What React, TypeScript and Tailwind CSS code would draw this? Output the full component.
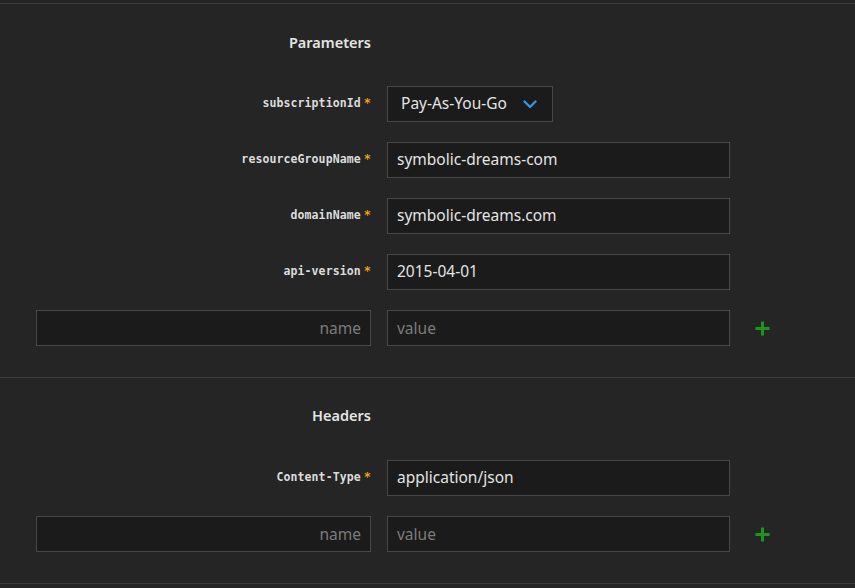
import { useState } from 'react'

type Field = {
  label: string
  value: string
  select?: boolean
}

const params: Field[] = [
  { label: 'subscriptionId', value: 'Pay-As-You-Go', select: true },
  { label: 'resourceGroupName', value: 'symbolic-dreams-com' },
  { label: 'domainName', value: 'symbolic-dreams.com' },
  { label: 'api-version', value: '2015-04-01' },
]

const headers: Field[] = [{ label: 'Content-Type', value: 'application/json' }]

const uiFont = { fontFamily: '"Noto Sans", "Open Sans", sans-serif' }
const monoFont = { fontFamily: '"DejaVu Sans Mono", "Liberation Mono", monospace' }

const Chevron = () => (
  <svg width="14" height="9" viewBox="0 0 14 9" className="shrink-0">
    <path d="M1.5 1.5 L7 7 L12.5 1.5" fill="none" stroke="#3794e0" strokeWidth="2.4" strokeLinecap="round" strokeLinejoin="round" />
  </svg>
)

const Plus = () => (
  <svg width="15" height="15" viewBox="0 0 15 15">
    <path d="M7.5 0.5 V14.5 M0.5 7.5 H14.5" stroke="#1d961d" strokeWidth="3" />
  </svg>
)

const Row = ({ field }: { field: Field }) => (
  <>
    <div className="flex items-center justify-end h-9">
      <span className="text-[11.5px] font-bold text-[#dcdcdc] tracking-[0.1px]" style={monoFont}>
        {field.label}
      </span>
      <span className="ml-[3px] text-[12px] font-bold text-[#e8a317] -mt-[2px]" style={monoFont}>*</span>
    </div>
    <div className="flex items-center h-9">
      {field.select ? (
        <div className="w-[166px] h-9 bg-[#1b1b1b] border border-[#474747] flex items-center justify-between pl-[13px] pr-[15px]">
          <span className="text-[15.5px] text-[#e4e4e4]" style={uiFont}>{field.value}</span>
          <Chevron />
        </div>
      ) : (
        <div className="w-full h-9 bg-[#1b1b1b] border border-[#474747] flex items-center pl-[9px]">
          <span className="text-[15.5px] text-[#e4e4e4]" style={uiFont}>{field.value}</span>
        </div>
      )}
    </div>
    <div />
  </>
)

const NewRow = () => {
  const [name, setName] = useState('')
  const [value, setValue] = useState('')
  return (
    <>
      <input
        value={name}
        onChange={(e) => setName(e.target.value)}
        placeholder="name"
        className="h-9 bg-[#1b1b1b] border border-[#474747] text-right pr-[9px] text-[15.5px] text-[#e4e4e4] placeholder:text-[#7b7b7b] outline-none"
        style={uiFont}
      />
      <input
        value={value}
        onChange={(e) => setValue(e.target.value)}
        placeholder="value"
        className="h-9 bg-[#1b1b1b] border border-[#474747] pl-[9px] text-[15.5px] text-[#e4e4e4] placeholder:text-[#7b7b7b] outline-none"
        style={uiFont}
      />
      <div className="flex items-center h-9 pl-[9px]">
        <Plus />
      </div>
    </>
  )
}

const Section = ({ title, fields, top, gap }: { title: string; fields: Field[]; top: string; gap: string }) => (
  <div className={`border-t border-[#3c3c3c] pb-[31px] ${top}`}>
    <div className="grid grid-cols-[335px_343px_auto] gap-x-4 gap-y-5 ml-[36px]">
      <div className={`flex justify-end ${gap}`}>
        <h2 className="text-[14.5px] font-semibold text-[#e4e4e4] leading-5" style={uiFont}>{title}</h2>
      </div>
      <div className={gap} />
      <div className={gap} />
      {fields.map((f) => (
        <Row key={f.label} field={f} />
      ))}
      <NewRow />
    </div>
  </div>
)

export default function App() {
  return (
    <div className="w-full h-[588px] bg-[#252526] pt-[3px] overflow-hidden">
      <Section title="Parameters" fields={params} top="pt-[28px]" gap="mb-[14px]" />
      <Section title="Headers" fields={headers} top="pt-[27px]" gap="mb-[15px]" />
      <div className="border-t border-[#3c3c3c]" />
    </div>
  )
}
